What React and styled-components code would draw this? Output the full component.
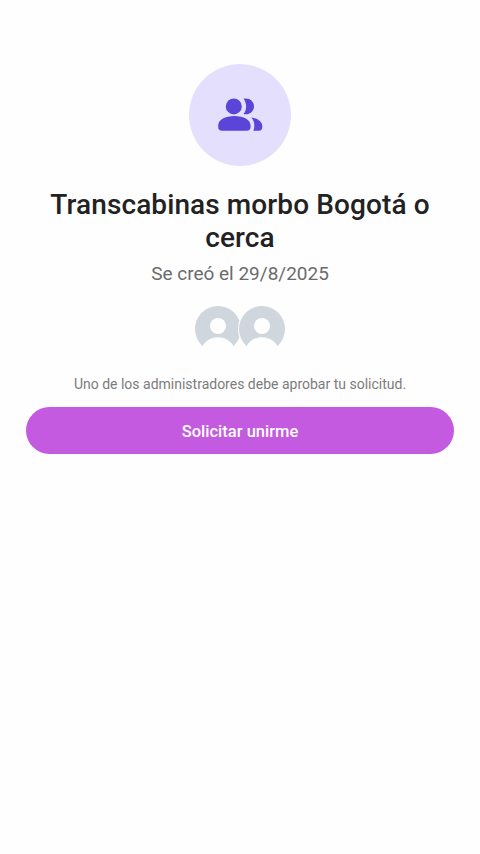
import React from "react";
import styled, { createGlobalStyle } from "styled-components";

const GlobalStyle = createGlobalStyle`
  * {
    box-sizing: border-box;
  }

  body {
    margin: 0;
    background: #fefefe;
    font-family: Roboto, "Liberation Sans", sans-serif;
  }
`;

const Screen = styled.main`
  display: flex;
  flex-direction: column;
  align-items: center;
  min-height: 854px;
  padding: 64px 26px 0;
`;

const GroupIcon = styled.div`
  display: flex;
  align-items: center;
  justify-content: center;
  width: 102px;
  height: 102px;
  border-radius: 50%;
  background: #e4dffc;
  color: #5b45d9;
`;

const Title = styled.h1`
  width: 400px;
  margin: 22px 0 0;
  color: #222;
  font-size: 28px;
  font-weight: 500;
  line-height: 33px;
  letter-spacing: 0.1px;
  text-align: center;
`;

const Created = styled.p`
  margin: 8px 0 0;
  color: #6b6b6b;
  font-size: 19px;
  line-height: 24px;
`;

const Members = styled.div`
  display: flex;
  margin-top: 19px;
`;

const Avatar = styled.svg`
  display: block;
  width: 48px;
  height: 48px;

  & + & {
    margin-left: -4px;
  }
`;

const Note = styled.p`
  margin: 21px 0 0;
  color: #7c7c7c;
  font-size: 14px;
  line-height: 20px;
`;

const JoinButton = styled.button`
  width: 100%;
  height: 47px;
  margin-top: 13px;
  padding: 2px 0 0;
  border: 0;
  border-radius: 24px;
  background: #c35adf;
  color: #fff;
  font-family: inherit;
  font-size: 16.5px;
  font-weight: 500;
`;

const PeopleIcon = () => (
  <svg width="46" height="34" viewBox="0 0 46 34" fill="currentColor">
    <circle cx="16.8" cy="8.4" r="8" />
    <path d="M1.2 27.4C1.2 21.8 8.2 18 17.4 18s16.200 3.800 16.200 9.400v1.400c0 2.700-1.200 3.900-3.900 3.900H5.100c-2.700 0-3.900-1.200-3.900-3.900z" />
    <path d="M26.600.8c6-1.100 10.400 2.700 10.400 7.600s-4.400 8.700-10.400 7.600c3.400-4.600 3.400-10.600 0-15.200z" />
    <path d="M34.300 19.500c6.700 1.100 11 4.300 11 8.600v1c0 2.500-1.100 3.600-3.600 3.600h-5.400c.7-1.500 1-3 1-5 0-3.300-1-6-3-8.200z" />
  </svg>
);

const App = () => {
  const members = [1, 2];

  return (
    <>
      <GlobalStyle />
      <Screen>
        <GroupIcon>
          <PeopleIcon />
        </GroupIcon>
        <Title>Transcabinas morbo Bogotá o cerca</Title>
        <Created>Se creó el 29/8/2025</Created>
        <Members>
          {members.map((member) => (
            <Avatar key={member} viewBox="0 0 48 48">
              <circle cx="24" cy="24" r="24" fill="#fefefe" />
              <circle cx="24" cy="24" r="23" fill="#cfd6dd" />
              <circle cx="24" cy="21" r="8" fill="#fefefe" />
              <path
                d="M7 48l1.500-7C12 35 17.500 32.200 24 32.200S36 35 39.500 41L41 48z"
                fill="#fefefe"
              />
            </Avatar>
          ))}
        </Members>
        <Note>Uno de los administradores debe aprobar tu solicitud.</Note>
        <JoinButton>Solicitar unirme</JoinButton>
      </Screen>
    </>
  );
};

export default App;
